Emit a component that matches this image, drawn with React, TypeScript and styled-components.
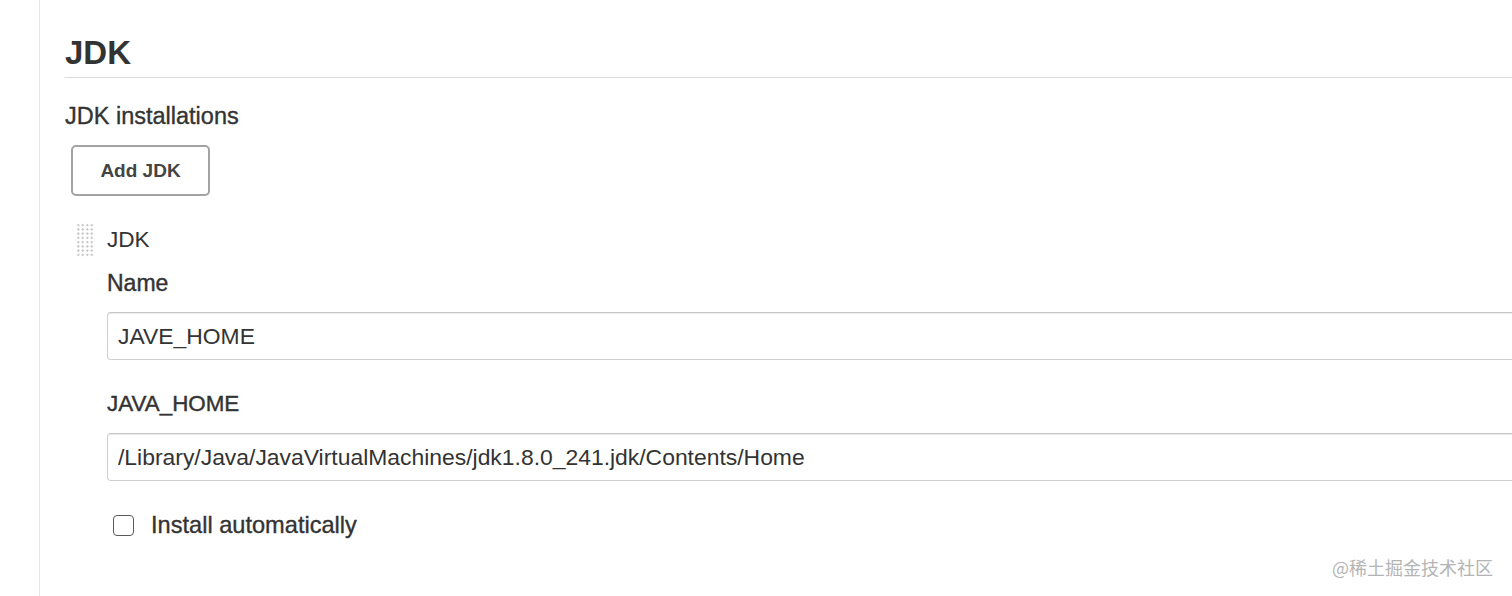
import React from 'react'
import styled, { createGlobalStyle } from 'styled-components'

const GlobalStyle = createGlobalStyle`
  html, body {
    margin: 0;
    padding: 0;
    background: #fff;
    overflow: hidden;
  }
  body {
    font-family: "Liberation Sans", Arial, Helvetica, sans-serif;
    color: #333;
  }
`

const App = () => {
  return (
    <Page>
      <GlobalStyle />
      <Gutter />
      <Content>
        <Heading>JDK</Heading>
        <SectionLabel>JDK installations</SectionLabel>
        <AddButton type="button">Add JDK</AddButton>

        <Item>
          <Handle />
          <ItemBody>
            <ItemTitle>JDK</ItemTitle>

            {/* Name */}
            <FieldLabel $size={23}>Name</FieldLabel>
            <Input defaultValue="JAVE_HOME" />

            {/* JAVA_HOME */}
            <FieldLabel $gap={31}>JAVA_HOME</FieldLabel>
            <Input defaultValue="/Library/Java/JavaVirtualMachines/jdk1.8.0_241.jdk/Contents/Home" />

            <CheckRow>
              <Box type="checkbox" />
              <CheckText>Install automatically</CheckText>
            </CheckRow>
          </ItemBody>
        </Item>
      </Content>
      <Watermark>@稀土掘金技术社区</Watermark>
    </Page>
  )
}

export default App

const Watermark = styled.div`
position: absolute;
right: 19px;
bottom: 17px;
font-family: "Noto Sans CJK SC", "Liberation Sans", sans-serif;
font-size: 18px;
line-height: 24px;
color: #b4b4b4;
`

const CheckText = styled.span`
font-size: 23.6px;
line-height: 30px;
color: #333;
-webkit-text-stroke: 0.35px #333;
`

const Box = styled.input`
appearance: none;
width: 21px;
height: 21px;
margin: 0 17px 0 6px;
border: 1.5px solid #5a5a5a;
border-radius: 4px;
background: #fff;
box-sizing: border-box;
`

const CheckRow = styled.label`
display: flex;
align-items: center;
margin-top: 29px;
`

const Input = styled.input`
display: block;
width: calc(100% + 60px);
height: 48px;
box-sizing: border-box;
padding: 0 10px;
border: 1px solid #cfcfcf;
border-top-color: #c4c4c4;
border-radius: 4px;
box-shadow: inset 0 1px 1px rgba(0, 0, 0, 0.08);
font-family: "Liberation Sans", Arial, sans-serif;
font-size: 22.9px;
color: #333;
outline: none;
`

const FieldLabel = styled.div<{ $gap?: number; $size?: number }>`
font-size: ${p => p.$size ?? 22.4}px;
line-height: 26px;
margin-top: ${p => p.$gap ?? 13}px;
margin-bottom: 16px;
-webkit-text-stroke: 0.4px #333;
`

const ItemTitle = styled.div`
font-size: 22.6px;
line-height: 34px;
`

const ItemBody = styled.div`
flex: 1;
display: flex;
flex-direction: column;
`

const Handle = styled.div`
width: 18px;
height: 34px;
flex-shrink: 0;
background-image: radial-gradient(circle, #c4c4c4 0.9px, transparent 1.3px);
background-size: 4.5px 4.25px;
`

const Item = styled.div`
display: flex;
gap: 13px;
margin: 27px 0 0 11px;
`

const AddButton = styled.button`
align-self: flex-start;
width: 139px;
height: 51px;
margin: 16px 0 0 6px;
border: 2px solid #a3a3a3;
border-radius: 5px;
background: #fff;
font-family: "Liberation Sans", Arial, sans-serif;
font-size: 19px;
font-weight: 700;
color: #444;
`

const SectionLabel = styled.div`
font-size: 23.5px;
line-height: 26px;
margin-top: 25px;
-webkit-text-stroke: 0.35px #333;
`

const Heading = styled.h1`
margin: 0;
font-size: 33px;
line-height: 40px;
font-weight: 700;
color: #333;
padding-bottom: 4px;
border-bottom: 1px solid #dcdcdc;
margin-right: -40px;
`

const Content = styled.div`
flex: 1;
display: flex;
flex-direction: column;
padding: 33px 0 0 25px;
`

const Gutter = styled.div`
width: 39px;
flex-shrink: 0;
border-right: 1px solid #e6e6e6;
`

const Page = styled.div`
position: relative;
display: flex;
width: 100%;
height: 596px;
overflow: hidden;
`
